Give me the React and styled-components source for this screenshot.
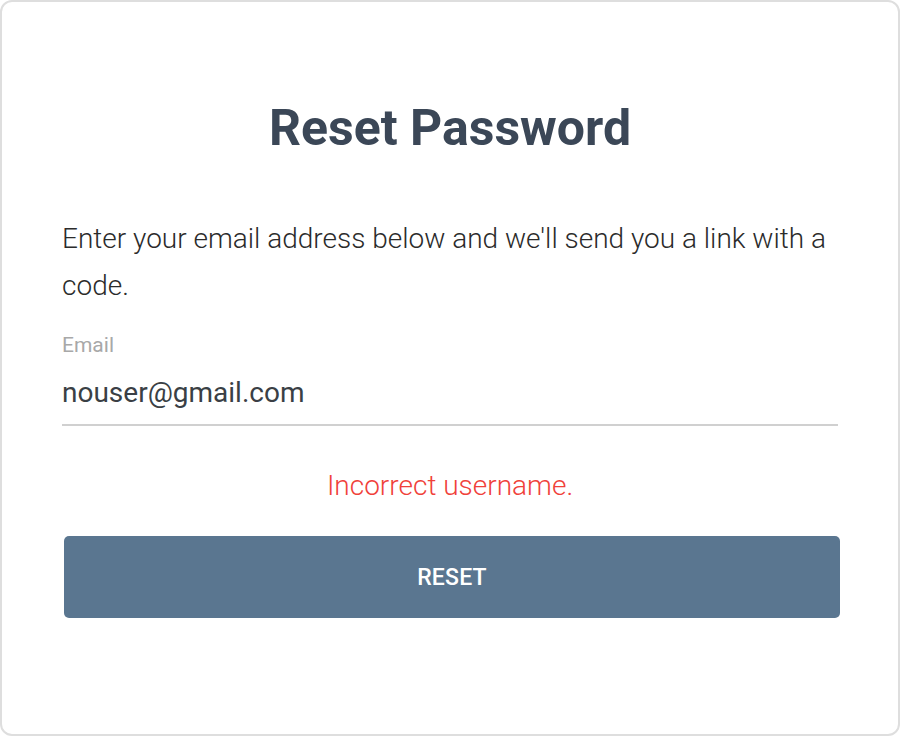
import React from "react";
import styled, { createGlobalStyle } from "styled-components";

const Global = createGlobalStyle`
  html, body { margin: 0; padding: 0; background: #fff; }
  body { font-family: Roboto, "Liberation Sans", sans-serif; }
  * { box-sizing: border-box; }
`;

const Card = styled.div`
  width: 900px;
  height: 736px;
  border: 2px solid #dedede;
  border-radius: 12px;
  background: #fff;
  padding: 94px 60px 0 60px;
  display: flex;
  flex-direction: column;
`;

const Title = styled.h1`
  margin: 0;
  text-align: center;
  font-family: Roboto, sans-serif;
  font-weight: 700;
  font-size: 50px;
  line-height: 64px;
  color: #3b4757;
`;

const Intro = styled.p`
  margin: 55px 0 0 0;
  font-family: Roboto, sans-serif;
  font-weight: 300;
  font-size: 28px;
  line-height: 47px;
  color: #2b2b2b;
`;

const Field = styled.label`
  display: flex;
  flex-direction: column;
  margin-top: 24px;
`;

const FieldLabel = styled.span`
  font-size: 21px;
  line-height: 24px;
  color: #a8a8a8;
  font-weight: 400;
`;

const Input = styled.input`
  border: none;
  border-bottom: 2px solid #d0d0d0;
  outline: none;
  padding: 20px 0 17px 0;
  font-family: Roboto, sans-serif;
  font-size: 28px;
  line-height: 30px;
  height: 69px;
  color: #3a3f45;
  background: transparent;
  width: 100%;
`;

const ErrorText = styled.div`
  margin-top: 43px;
  text-align: center;
  font-weight: 300;
  font-size: 28px;
  line-height: 34px;
  color: #f0413a;
`;

const Button = styled.button`
  margin: 33px -2px 0 2px;
  height: 82px;
  border: none;
  border-radius: 5px;
  background: #5a7690;
  color: #fff;
  font-family: Roboto, sans-serif;
  font-weight: 500;
  font-size: 23px;
  letter-spacing: 0.2px;
  cursor: pointer;
`;

export default function App() {
  return (
    <>
      <Global />
      <Card>
        <Title>Reset Password</Title>
        <Intro>Enter your email address below and we'll send you a link with a code.</Intro>
        <Field>
          <FieldLabel>Email</FieldLabel>
          <Input defaultValue="nouser@gmail.com" />
        </Field>
        <ErrorText>Incorrect username.</ErrorText>
        <Button>RESET</Button>
      </Card>
    </>
  );
}
